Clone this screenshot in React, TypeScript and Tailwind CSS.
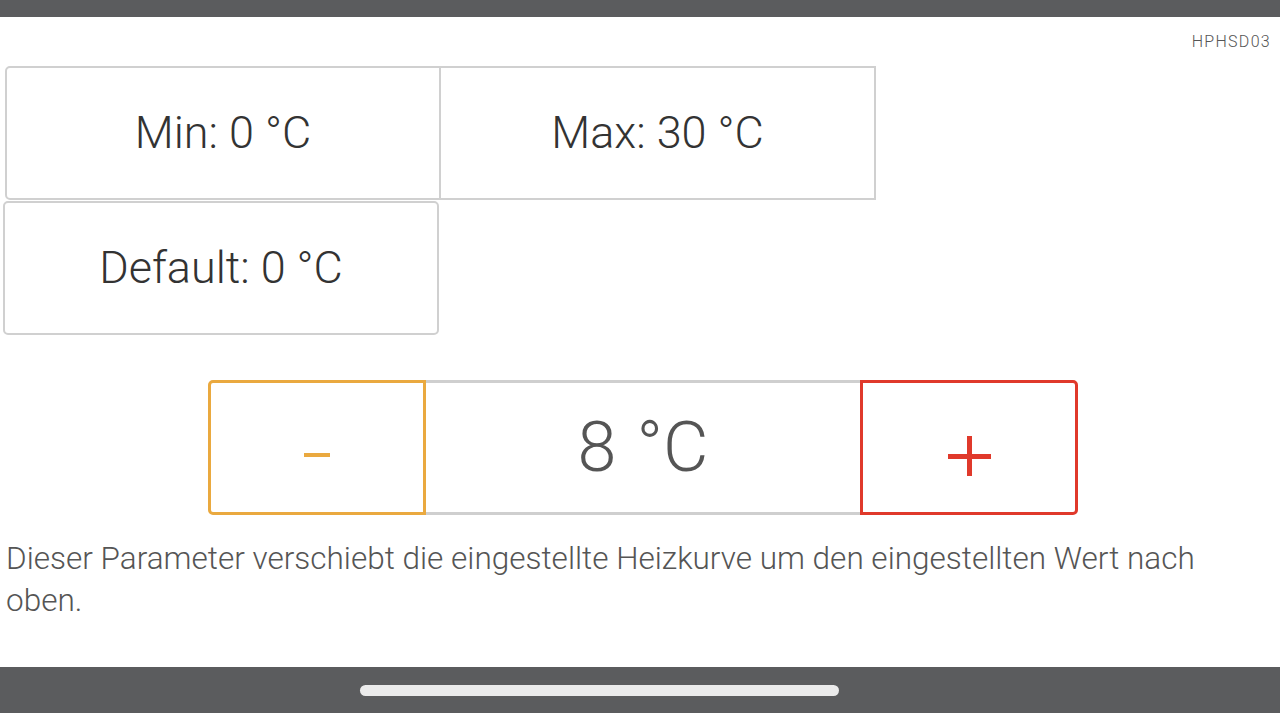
import React from 'react';

const font = { fontFamily: 'Roboto, "Liberation Sans", sans-serif' };

const App: React.FC = () => {
    return (
        <div className="h-[713px] w-[1280px] flex flex-col bg-white overflow-hidden font-light" style={font}>
            <div className="h-[17px] bg-[#5b5c5e] shrink-0"></div>

            <div className="flex-1 flex flex-col">
                <div className="flex justify-end pr-[9px] pt-[16px] h-[49px]">
                    <span className="text-[16px] leading-[18px] text-[#555] tracking-[1.3px]">HPHSD03</span>
                </div>

                {/* limits */}
                <div className="flex ml-[5px]">
                    <div className="w-[436px] h-[134px] border-2 border-[#d0d0d0] rounded-l-[5px] flex items-center justify-center">
                        <span className="text-[45px] text-[#333]">Min: 0 °C</span>
                    </div>
                    <div className="w-[435px] h-[134px] border-2 border-l-0 border-[#d0d0d0] flex items-center justify-center">
                        <span className="text-[45px] text-[#333]">Max: 30 °C</span>
                    </div>
                </div>
                <div className="ml-[3px] mt-[1px] w-[436px] h-[134px] border-2 border-[#d0d0d0] rounded-[5px] flex items-center justify-center">
                    <span className="text-[45px] text-[#333]">Default: 0 °C</span>
                </div>

                {/* stepper */}
                <div className="flex ml-[208px] mt-[45px] h-[135px]">
                    <button className="w-[218px] h-full border-[3px] border-[#eaa93f] rounded-l-[5px] flex items-center justify-center">
                        <span className="block w-[26px] h-[4px] mt-[15px] bg-[#eaa93f]"></span>
                    </button>
                    <div className="w-[434px] h-full border-y-[3px] border-[#cfcfcf] flex items-center justify-center">
                        <span className="text-[70px] text-[#555] [word-spacing:3px]">8 °C</span>
                    </div>
                    <button className="w-[218px] h-full border-[3px] border-[#e0392b] rounded-r-[5px] flex items-center justify-center">
                        <svg width="43" height="40" viewBox="0 0 43 40" className="mt-[17px]">
                            <rect x="0" y="18" width="43" height="5" fill="#e0392b" />
                            <rect x="19" y="0" width="5" height="40" fill="#e0392b" />
                        </svg>
                    </button>
                </div>

                <p className="mt-[23px] pl-[6px] pr-[6px] text-[31.5px] leading-[42px] text-[#555]">
                    Dieser Parameter verschiebt die eingestellte Heizkurve um den eingestellten Wert nach oben.
                </p>
            </div>

            <div className="h-[46px] bg-[#5b5c5e] shrink-0 flex items-center pl-[360px]">
                <div className="w-[479px] h-[11px] rounded-full bg-[#ebebeb]"></div>
            </div>
        </div>
    );
};

export default App;
